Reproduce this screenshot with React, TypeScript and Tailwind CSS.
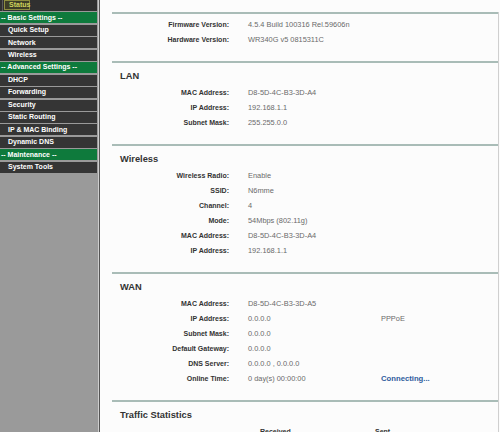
const menu: { t: string; kind?: "active" | "group" }[] = [
  { t: "Status", kind: "active" },
  { t: "-- Basic Settings --", kind: "group" },
  { t: "Quick Setup" },
  { t: "Network" },
  { t: "Wireless" },
  { t: "-- Advanced Settings --", kind: "group" },
  { t: "DHCP" },
  { t: "Forwarding" },
  { t: "Security" },
  { t: "Static Routing" },
  { t: "IP & MAC Binding" },
  { t: "Dynamic DNS" },
  { t: "-- Maintenance --", kind: "group" },
  { t: "System Tools" },
];

type Row = { label: string; value: string; extra?: string; link?: boolean };

const top: Row[] = [
  { label: "Firmware Version:", value: "4.5.4 Build 100316 Rel.59606n" },
  { label: "Hardware Version:", value: "WR340G v5 0815311C" },
];

const lan: Row[] = [
  { label: "MAC Address:", value: "D8-5D-4C-B3-3D-A4" },
  { label: "IP Address:", value: "192.168.1.1" },
  { label: "Subnet Mask:", value: "255.255.0.0" },
];

const wireless: Row[] = [
  { label: "Wireless Radio:", value: "Enable" },
  { label: "SSID:", value: "N6mme" },
  { label: "Channel:", value: "4" },
  { label: "Mode:", value: "54Mbps (802.11g)" },
  { label: "MAC Address:", value: "D8-5D-4C-B3-3D-A4" },
  { label: "IP Address:", value: "192.168.1.1" },
];

const wan: Row[] = [
  { label: "MAC Address:", value: "D8-5D-4C-B3-3D-A5" },
  { label: "IP Address:", value: "0.0.0.0", extra: "PPPoE" },
  { label: "Subnet Mask:", value: "0.0.0.0" },
  { label: "Default Gateway:", value: "0.0.0.0" },
  { label: "DNS Server:", value: "0.0.0.0 , 0.0.0.0" },
  { label: "Online Time:", value: "0 day(s) 00:00:00", extra: "Connecting...", link: true },
];

function Sidebar() {
  return (
    <aside className="flex w-[99px] shrink-0 flex-col gap-[1.45px] border-r border-[#cdcdcd] bg-[#9a9a9a]">
      {menu.map((m) => {
        if (m.kind === "active") {
          return (
            <div key={m.t} className="flex h-[11px] w-[97px] bg-[#303030]">
              <div className="ml-[2px] h-[11px] w-px bg-[#5a5a5a]" />
              <div className="ml-[1px] flex h-[10px] w-[26px] items-center border border-[#8d8d3f] bg-[#3e3e27] pl-[4px] text-[7px] font-bold text-[#cfd45c]">
                {m.t}
              </div>
            </div>
          );
        }
        if (m.kind === "group") {
          return (
            <div
              key={m.t}
              className="flex h-[11px] w-[97px] items-center bg-[#0e7a3c] pl-[1px] text-[7px] font-bold whitespace-nowrap text-white"
            >
              {m.t}
            </div>
          );
        }
        return (
          <div
            key={m.t}
            className="flex h-[11px] w-[97px] items-center bg-[#353535] pl-[8px] text-[7px] font-bold text-white"
          >
            {m.t}
          </div>
        );
      })}
    </aside>
  );
}

function Sep() {
  return <div className="h-[2px] bg-[#a9bcb7]" />;
}

function Rows({ rows }: { rows: Row[] }) {
  return (
    <div>
      {rows.map((r) => (
        <div key={r.label} className="flex h-[15px] items-center leading-[15px]">
          <div className="w-[117px] text-right text-[7px] font-bold text-[#333]">{r.label}</div>
          <div className="ml-[19px] w-[133px] text-[7.4px] text-[#6a6a6a]">{r.value}</div>
          {r.extra &&
            (r.link ? (
              <div className="text-[7.7px] font-bold text-[#2f5d9c]">{r.extra}</div>
            ) : (
              <div className="text-[7.4px] text-[#6a6a6a]">{r.extra}</div>
            ))}
        </div>
      ))}
    </div>
  );
}

function Section({ title, rows }: { title: string; rows: Row[] }) {
  return (
    <>
      <Sep />
      <div className="pt-[6px] pb-[13.5px]">
        <h2 className="h-[14px] pl-[8px] text-[9.3px] leading-[14px] font-bold text-[#333]">{title}</h2>
        <div className="mt-[2.5px]">
          <Rows rows={rows} />
        </div>
      </div>
    </>
  );
}

export default function App() {
  return (
    <div className="flex h-[432px] w-[500px] overflow-hidden font-['Liberation_Sans',Arial,sans-serif]">
      <Sidebar />
      <main className="flex-1 border-l border-[#555] bg-[#fcfcfc]">
        <div className="mt-[11.5px] mr-[1px] ml-[12px] border-r border-[#cfcfcf]">
          <Sep />
          <div className="pt-[3.5px] pb-[13.5px]">
            <Rows rows={top} />
          </div>
          <Section title="LAN" rows={lan} />
          <Section title="Wireless" rows={wireless} />
          <Section title="WAN" rows={wan} />
          <Sep />
          <div className="pt-[6px]">
            <h2 className="h-[14px] pl-[8px] text-[9.3px] leading-[14px] font-bold text-[#333]">
              Traffic Statistics
            </h2>
            <div className="mt-[2.5px] flex h-[15px] items-center leading-[15px] text-[7px] font-bold text-[#333]">
              <div className="ml-[148px] w-[115px]">Received</div>
              <div>Sent</div>
            </div>
          </div>
        </div>
      </main>
    </div>
  );
}
